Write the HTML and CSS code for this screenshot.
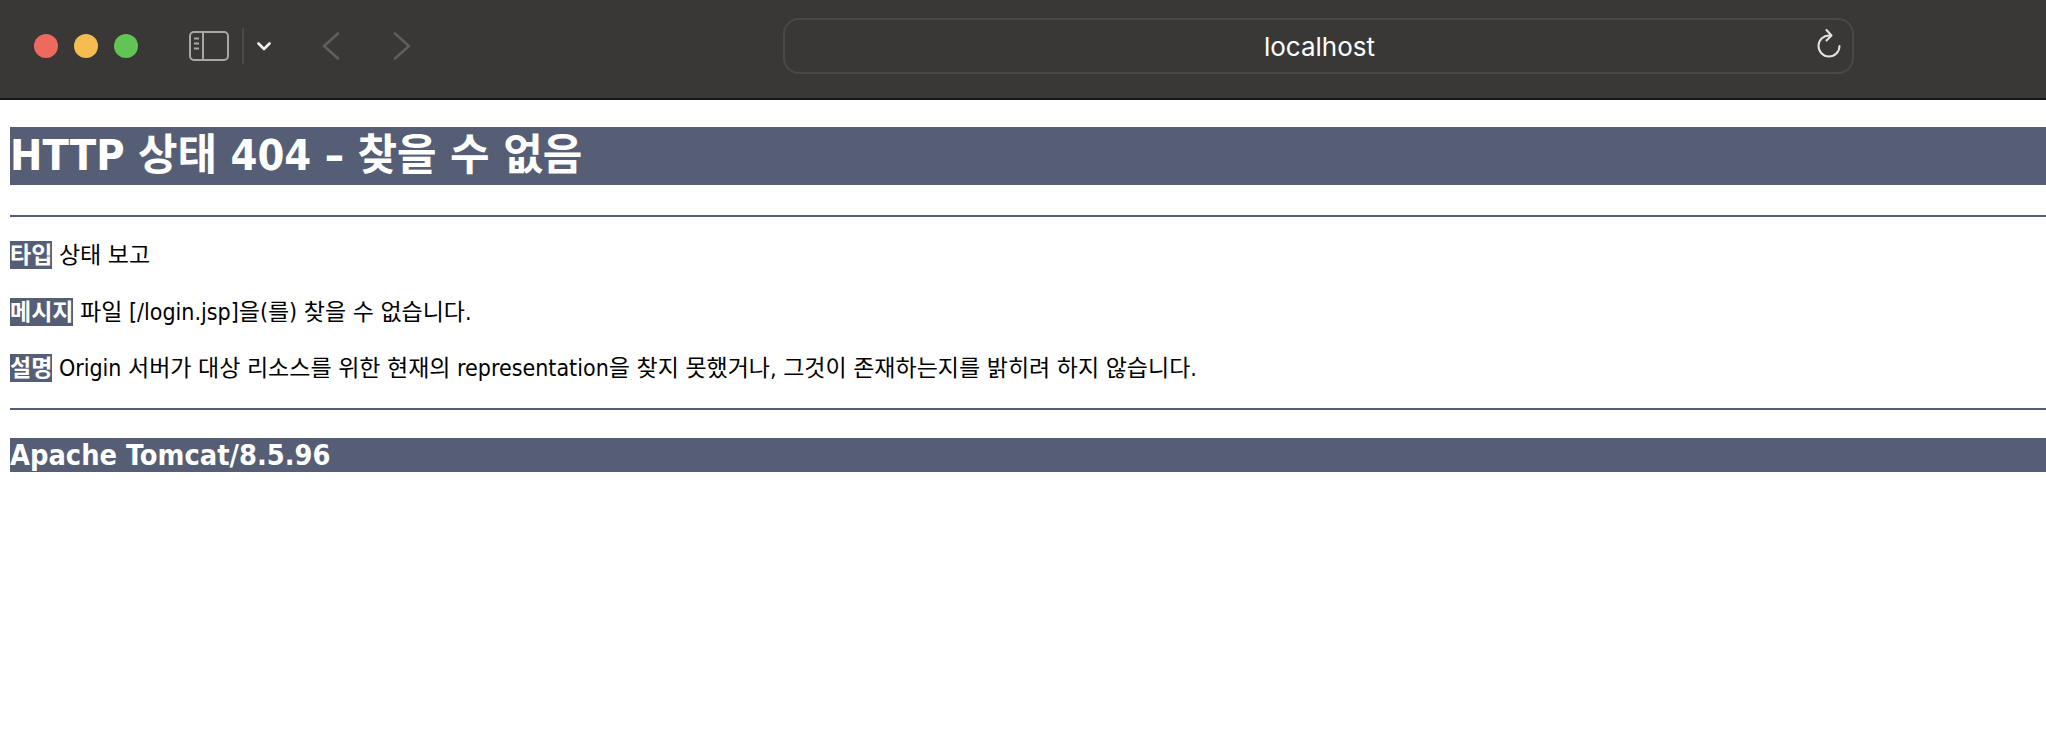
FILE: index.html
```html
<!DOCTYPE html>
<html lang="ko">

<head>
    <meta charset="UTF-8">
    <title>HTTP 상태 404 – 찾을 수 없음</title>
    <link rel="stylesheet" href="styles.css">
</head>

<body>
    <div class="toolbar">
        <div class="lights">
            <span class="light red"></span>
            <span class="light yellow"></span>
            <span class="light green"></span>
        </div>
        <svg class="sidebar-icon" width="40" height="30" viewBox="0 0 40 30" fill="none">
            <rect x="1" y="1" width="38" height="28" rx="4" stroke="#a8a7a5" stroke-width="2" />
            <path d="M14 1V29" stroke="#a8a7a5" stroke-width="2" />
            <path d="M5 7.500H10M5 12.500H10M5 17.500H10" stroke="#a8a7a5" stroke-width="2" />
        </svg>
        <span class="divider"></span>
        <svg class="chevron" width="14" height="9" viewBox="0 0 14 9" fill="none">
            <path d="M1.500 1.500L7 7L12.500 1.500" stroke="#f0f0f0" stroke-width="2.600" stroke-linecap="round" stroke-linejoin="round" />
        </svg>
        <svg class="back" width="18" height="28" viewBox="0 0 18 28" fill="none">
            <path d="M16 1.500L2 14L16 26.500" stroke="#5f5e5c" stroke-width="2.600" stroke-linecap="round" stroke-linejoin="round" />
        </svg>
        <svg class="forward" width="18" height="28" viewBox="0 0 18 28" fill="none">
            <path d="M2 1.500L16 14L2 26.500" stroke="#5f5e5c" stroke-width="2.600" stroke-linecap="round" stroke-linejoin="round" />
        </svg>
        <div class="url-bar">
            <span class="url">localhost</span>
            <svg class="reload" width="26" height="30" viewBox="0 0 26 30" fill="none">
                <path d="M13.500 6.500A10.500 10.500 0 1 0 23.500 17" stroke="#e4e4e3" stroke-width="2" stroke-linecap="round" />
                <path d="M10.500 1L15.500 6.500L10.500 11.500" stroke="#e4e4e3" stroke-width="2" stroke-linecap="round" stroke-linejoin="round" />
            </svg>
        </div>
    </div>

    <div class="page">
        <h1>HTTP 상태 404 – 찾을 수 없음</h1>
        <hr class="line">
        <p><b>타입</b> 상태 보고</p>
        <p><b>메시지</b> 파일 [/login.jsp]을(를) 찾을 수 없습니다.</p>
        <p><b>설명</b> Origin 서버가 대상 리소스를 위한 현재의 representation을 찾지 못했거나, 그것이 존재하는지를 밝히려 하지 않습니다.</p>
        <hr class="line">
        <h3>Apache Tomcat/8.5.96</h3>
    </div>
</body>

</html>
```

FILE: styles.css
```css
body {
    margin: 0;
    background-color: white;
    color: black;
    font-family: "DejaVu Sans Condensed", "DejaVu Sans", "Noto Sans CJK KR", sans-serif;
}

.toolbar {
    display: flex;
    align-items: center;
    height: 92px;
    padding-bottom: 6px;
    background-color: #393836;
    border-bottom: 2px solid #161616;
}

.lights {
    display: flex;
    gap: 16px;
    margin-left: 34px;
}

.light {
    width: 24px;
    height: 24px;
    border-radius: 50%;
}

.red {
    background-color: #ee6a5f;
}

.yellow {
    background-color: #f5bd4f;
}

.green {
    background-color: #61c454;
}

.sidebar-icon {
    margin-left: 51px;
}

.divider {
    width: 2px;
    height: 36px;
    margin-left: 13px;
    background-color: #4b4a48;
}

.chevron {
    margin-left: 13px;
}

.back {
    margin-left: 51px;
}

.forward {
    margin-left: 53px;
}

.url-bar {
    display: flex;
    align-items: center;
    justify-content: center;
    position: relative;
    width: 1067px;
    height: 52px;
    margin-left: 372px;
    border: 2px solid #4a4947;
    border-radius: 16px;
}

.url {
    margin-left: 2px;
    color: white;
    font-family: Inter, "Liberation Sans", sans-serif;
    font-size: 26px;
}

.reload {
    position: absolute;
    right: 10px;
    top: 9px;
}

.page {
    padding: 27px 0 0 10px;
}

h1 {
    margin: 0 0 30px;
    padding-bottom: 2px;
    background-color: #565e75;
    color: white;
    font-size: 43px;
    line-height: 56px;
}

h3 {
    margin: 28px 0 0;
    background-color: #565e75;
    color: white;
    font-size: 28.700px;
    line-height: 34px;
}

p {
    margin: 28px 0 0;
    font-size: 23px;
    line-height: 28.500px;
}

p b {
    padding: 1px 0;
    background-color: #565e75;
    color: white;
}

.line {
    height: 2px;
    margin: 0;
    border: none;
    background-color: #565e75;
}

.line + p {
    margin-top: 24px;
}

p + .line {
    margin-top: 25px;
}
```
